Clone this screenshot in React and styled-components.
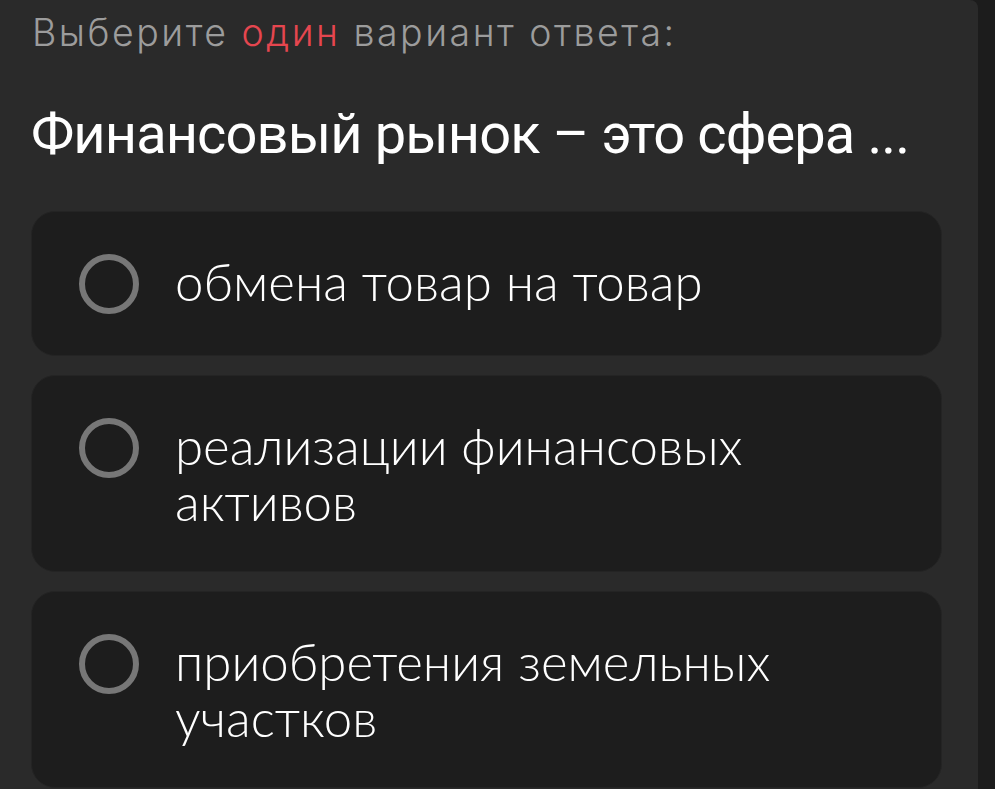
import React from 'react';
import styled, { createGlobalStyle } from 'styled-components';

const GlobalStyle = createGlobalStyle`
  html, body {
    margin: 0;
    padding: 0;
    background: #1c1c1c;
  }
  body {
    font-family: 'Lato', 'Noto Sans', sans-serif;
    -webkit-font-smoothing: antialiased;
  }
`;

const Screen = styled.div`
  display: flex;
  width: 995px;
  height: 789px;
  overflow: hidden;
  background: #1c1c1c;
`;

const Panel = styled.div`
  width: 978px;
  flex-shrink: 0;
  box-sizing: border-box;
  background: #2a2a2a;
  border-top-right-radius: 8px;
  padding: 10px 36px 0 31px;
  display: flex;
  flex-direction: column;
`;

const Hint = styled.div`
  color: #9c9c9c;
  font-family: 'Inter', 'Lato', sans-serif;
  font-weight: 300;
  font-size: 37.5px;
  line-height: 46px;
  letter-spacing: 2.5px;
  padding-left: 1px;
`;

const Accent = styled.span`
  color: #e5464f;
`;

const Question = styled.h1`
  margin: 46px 0 0;
  color: #ffffff;
  font-family: 'Roboto', 'Liberation Sans', sans-serif;
  font-weight: 400;
  font-size: 56px;
  line-height: 64px;
  letter-spacing: -0.9px;
`;

const Options = styled.div`
  display: flex;
  flex-direction: column;
  gap: 19px;
  margin-top: 45px;
`;

const Option = styled.label`
  display: flex;
  align-items: flex-start;
  gap: 36px;
  box-sizing: border-box;
  padding: 41.5px 40px 41.5px 47px;
  background: #1d1d1d;
  border: 1px solid #242424;
  border-radius: 24px;
  cursor: pointer;
`;

const Radio = styled.span`
  width: 60px;
  height: 60px;
  flex-shrink: 0;
  box-sizing: border-box;
  border: 6px solid #777777;
  border-radius: 50%;
`;

const OptionText = styled.span`
  color: #ffffff;
  font-weight: 300;
  font-size: 51px;
  line-height: 56px;
`;

const answers = [
  'обмена товар на товар',
  'реализации финансовых активов',
  'приобретения земельных участков',
];

export default function App() {
  return (
    <>
      <GlobalStyle />
      <Screen>
        <Panel>
          <Hint>
            Выберите <Accent>один</Accent> вариант ответа:
          </Hint>
          <Question>Финансовый рынок – это сфера ...</Question>
          <Options>
            {answers.map((text) => (
              <Option key={text}>
                <Radio />
                <OptionText>{text}</OptionText>
              </Option>
            ))}
          </Options>
        </Panel>
      </Screen>
    </>
  );
}
